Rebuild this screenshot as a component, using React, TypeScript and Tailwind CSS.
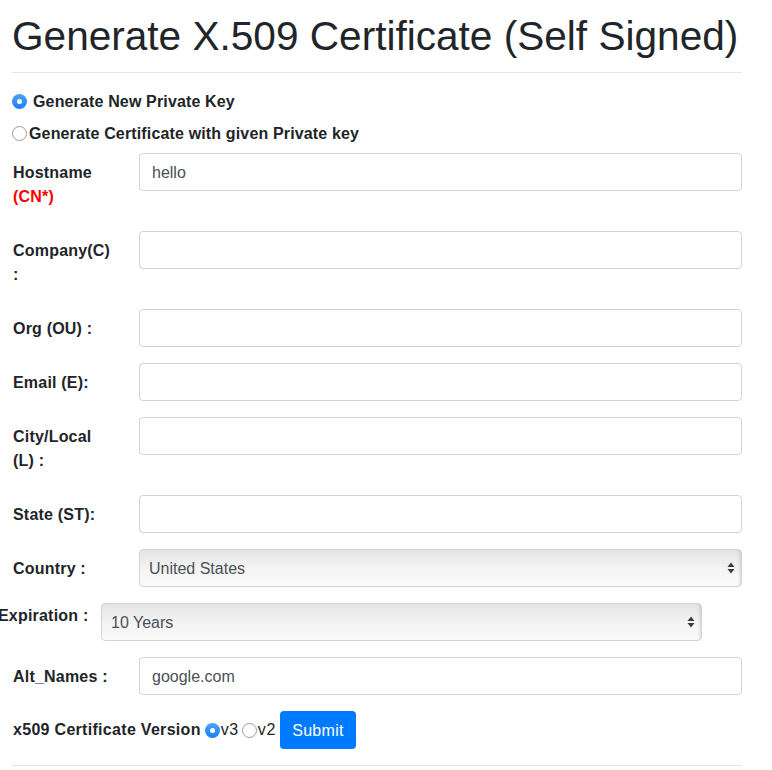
import React from 'react';

const labelCls =
  'w-[97px] shrink-0 pt-[8px] pb-[6px] text-[16px] font-bold leading-6 tracking-[0.2px] text-[#212529]';
const inputCls =
  'ml-[29px] h-[38px] w-[603px] rounded-[4px] border border-[#ced4da] bg-white px-3 pt-[2px] text-[16px] text-[#495057] outline-none';

function Radio({ checked }: { checked?: boolean }) {
  return checked ? (
    <span className="flex h-[15px] w-[15px] shrink-0 items-center justify-center rounded-full bg-gradient-to-b from-[#4aa3f7] to-[#1a7ef0]">
      <span className="h-[5px] w-[5px] rounded-full bg-white" />
    </span>
  ) : (
    <span className="h-[15px] w-[15px] shrink-0 rounded-full border border-[#9b9b9b] bg-white" />
  );
}

function Arrows() {
  return (
    <svg width="8" height="12" viewBox="0 0 8 12" className="shrink-0">
      <path d="M4 0.5 L7.5 5 L0.5 5 Z" fill="#3d3d3d" />
      <path d="M4 11.5 L7.5 7 L0.5 7 Z" fill="#3d3d3d" />
    </svg>
  );
}

function Field({ label, value, extra }: { label: string; value?: string; extra?: React.ReactNode }) {
  return (
    <div className="mb-4 flex items-start pl-[13px]">
      <label className={labelCls}>
        {label}
        {extra}
      </label>
      <input className={inputCls} defaultValue={value} />
    </div>
  );
}

function Select({ value, width }: { value: string; width: string }) {
  return (
    <div
      className={`flex h-[38px] ${width} items-center justify-between rounded-[4px] border border-[#d3d3d3] bg-gradient-to-b from-[#e4e4e4] via-[#f3f3f3] to-[#fbfbfb] pl-[9px] pr-[6px] text-[16px] text-[#495057] shadow-[inset_-3px_0_3px_-2px_rgba(0,0,0,0.15)]`}
    >
      <span className="pt-[2px]">{value}</span>
      <Arrows />
    </div>
  );
}

export default function App() {
  return (
    <div className="h-[770px] w-[772px] overflow-hidden bg-white font-['Liberation_Sans',Arial,sans-serif] text-[#212529]">
      <h1 className="ml-[12px] mt-[12px] h-[48px] whitespace-nowrap text-[40.6px] font-medium leading-[48px] text-[#212529]">
        Generate X.509 Certificate (Self Signed)
      </h1>
      <hr className="mx-[12px] mt-[12px] w-[730px] border-t border-[#e5e5e5]" />

      {/* key mode */}
      <div className="mt-4 flex flex-col gap-2 pl-[12px] text-[16px] font-bold leading-6 tracking-[0.15px]">
        <div className="flex h-6 items-center">
          <Radio checked />
          <span className="ml-[6px] pt-[2px]">Generate New Private Key</span>
        </div>
        <div className="flex h-6 items-center">
          <Radio />
          <span className="ml-[2px] pt-[2px]">Generate Certificate with given Private key</span>
        </div>
      </div>

      <div className="mt-2">
        <Field label="Hostname " value="hello" extra={<span className="text-[#ff0000]">(CN*)</span>} />
        <Field label="Company(C) :" />
        <Field label="Org (OU) :" />
        <Field label="Email (E):" />
        <Field label="City/Local (L) :" />
        <Field label="State (ST):" />

        <div className="mb-4 flex items-start pl-[13px]">
          <label className={labelCls}>Country :</label>
          <div className="ml-[29px]">
            <Select value="United States" width="w-[603px]" />
          </div>
        </div>

        <div className="mb-4 flex items-start">
          <label className="w-[101px] shrink-0 whitespace-nowrap pt-px text-[16px] font-bold leading-6 tracking-[0.2px] -ml-[2px]">
            Expiration :
          </label>
          <div className="ml-[2px]">
            <Select value="10 Years" width="w-[601px]" />
          </div>
        </div>

        <Field label="Alt_Names :" value="google.com" />

        <div className="flex items-center pl-[13px] text-[16px] leading-6">
          <span className="font-bold tracking-[0.3px]">x509 Certificate Version</span>
          <span className="ml-[4px] flex items-center">
            <Radio checked />
            <span className="ml-[1px] tracking-[0.6px]">v3</span>
          </span>
          <span className="ml-[3px] flex items-center">
            <Radio />
            <span className="ml-[1px] tracking-[0.6px]">v2</span>
          </span>
          <button className="ml-[4px] h-[38px] w-[76px] rounded-[4px] bg-[#007bff] pt-[2px] text-[16px] tracking-[0.3px] text-white">
            Submit
          </button>
        </div>
      </div>

      <hr className="mx-[12px] mt-4 w-[730px] border-t border-[#e5e5e5]" />
    </div>
  );
}
